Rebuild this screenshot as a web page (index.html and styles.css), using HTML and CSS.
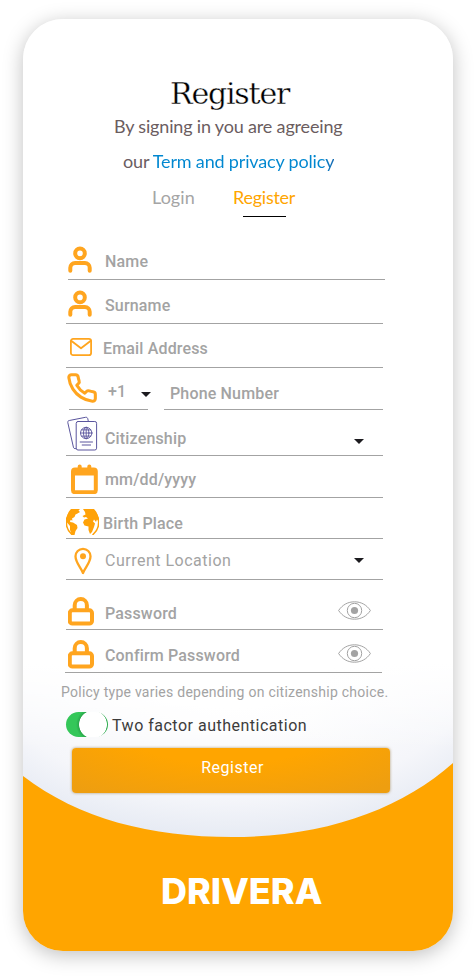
FILE: index.html
```html
<!DOCTYPE html>
<html lang="en">
<head>
<meta charset="utf-8">
<title>Drivera – Register</title>
<link rel="stylesheet" href="styles.css">
</head>
<body>
<svg class="defs" width="0" height="0" aria-hidden="true">
  <symbol id="user" viewBox="0 0 24 28"><circle cx="12" cy="7.4" r="4.8"/><path d="M2.300 24.700v-3a4.800 4.800 0 0 1 4.800-4.800h9.800a4.800 4.800 0 0 1 4.800 4.800v3"/></symbol>
  <symbol id="lock" viewBox="0 0 26 29"><rect x="1.8" y="13.3" width="22.2" height="13.3" rx="2.6"/><path d="M6.7 13V8.2a6.1 6.1 0 0 1 12.2 0V13"/></symbol>
  <symbol id="eye" viewBox="0 0 33 19"><path d="M.6 9.5C4.5 3.7 10 .8 16.500 .8S28.500 3.700 32.400 9.500C28.500 15.300 23 18.200 16.500 18.200S4.500 15.300 .6 9.500z"/><circle cx="16.500" cy="9.500" r="7.200"/><circle class="pupil" cx="16.500" cy="9.500" r="3.600"/></symbol>
</svg>
<main class="card">
  <svg class="backdrop" viewBox="0 0 430 932" aria-hidden="true"><path d="M0 757C56 800 128 818 209 818C303 818 378 790 430 744V932H0z"/></svg>
  <header class="head">
    <h1>Register</h1>
    <p class="terms terms-first">By signing in you are agreeing</p>
    <p class="terms terms-second">our <a>Term and privacy policy</a></p>
    <nav class="tabs"><a class="login">Login</a><a class="current">Register</a></nav>
  </header>
  <form class="form">
    <div class="row name"><svg class="icon user"><use href="#user"/></svg><label>Name</label></div>
    <div class="row surname"><svg class="icon user"><use href="#user"/></svg><label>Surname</label></div>
    <div class="row email"><svg class="icon" width="22" height="18" viewBox="0 0 22 18"><rect x=".9" y=".9" width="20.200" height="16.200" rx="2.200"/><path d="M1.200 2.800L11 10.300l9.800-7.500"/></svg><label>Email Address</label></div>
    <div class="split">
      <div class="row code"><svg class="icon" width="32" height="32" viewBox="0 0 24 24"><path d="M22 16.920v3a2 2 0 0 1-2.180 2 19.790 19.790 0 0 1-8.630-3.070 19.500 19.500 0 0 1-6-6 19.790 19.790 0 0 1-3.070-8.670A2 2 0 0 1 4.110 2h3a2 2 0 0 1 2 1.720c.13.96.36 1.900.7 2.810a2 2 0 0 1-.45 2.110L8.090 9.910a16 16 0 0 0 6 6l1.270-1.270a2 2 0 0 1 2.110-.45c.91.34 1.850.57 2.810.7A2 2 0 0 1 22 16.920z"/></svg><label>+1</label><i class="arrow"></i></div>
      <div class="row phone"><label>Phone Number</label></div>
    </div>
    <div class="row citizenship"><svg class="icon" width="31" height="35" viewBox="0 0 31 35"><path d="M11 5.500h16.800a1.800 1.800 0 0 1 1.800 1.800v24.900a1.800 1.800 0 0 1-1.800 1.800H11a1.800 1.800 0 0 1-1.800-1.800V7.300a1.800 1.800 0 0 1 1.800-1.800zM9 32.600c-1.700.3-2.400-.3-2.600-1.500L.8 6.600c-.2-1.200.3-1.900 1.500-2.100L18.500 1.300c1.300-.2 2 .3 2.300 1.500l.5 2.500"/><path d="M13.200 26h12.300M15.200 29h8.400"/><g class="mini-globe"><circle cx="19.200" cy="17" r="5.700"/><ellipse cx="19.200" cy="17" rx="2.700" ry="5.700"/><path d="M19.200 11.300v11.400M13.500 17h11.400M14.600 13.900h9.200M14.600 20.100h9.200"/></g></svg><label>Citizenship</label><i class="arrow"></i></div>
    <div class="row date"><svg class="icon" width="28" height="30" viewBox="0 0 28 30"><rect x="3" y="5.400" width="22.800" height="22.800" rx="2"/><path d="M9.700 2.600v4.500M19.300 2.600v4.500"/><path class="solid" d="M3 5h23v6.500H3z"/></svg><label>mm/dd/yyyy</label></div>
    <div class="row birth"><svg class="icon" width="33" height="26" viewBox="0 0 33 26"><path class="ring" d="M6 1A16 16 0 0 0 6 25.500M27 1A16 16 0 0 1 27 25.500"/><path d="M5 0H14L12.500 1.500 14 3 11.500 4.500 9.500 5.500 8.500 8 6 9.500 6.500 11.500 4.500 11 4 13 7 13.500 11 16 11.500 19 9.500 22 8.500 26H6L4 21 4 17 1 13.500C0 8 2 3 5 0zM17 0H28C31 3 33 8 33 13L31 10.500 30 13 28 10.500 27 12.500 29 14.500 28 18 26 23 24 25 22.500 21 22.500 17.500 18.500 16.500 17 13.500 18.500 10.500 22 9.500 20 8 18 8.500 16.500 7 19.500 5.500 19 3z"/></svg><label>Birth Place</label></div>
    <div class="row location"><svg class="icon" width="18" height="28" viewBox="0 0 18 28"><path d="M9 26C6.800 20.500 1.500 15.500 1.500 9.300a7.500 7.500 0 0 1 15 0C16.500 15.500 11.200 20.500 9 26z"/><circle class="solid" cx="9" cy="9.200" r="3"/></svg><label>Current Location</label><i class="arrow"></i></div>
    <div class="row password"><svg class="icon lock"><use href="#lock"/></svg><label>Password</label><svg class="eye"><use href="#eye"/></svg></div>
    <div class="row confirm"><svg class="icon lock"><use href="#lock"/></svg><label>Confirm Password</label><svg class="eye"><use href="#eye"/></svg></div>
    <p class="policy">Policy type varies depending on citizenship choice.</p>
    <div class="two-factor"><span class="toggle"></span><span>Two factor authentication</span></div>
    <button class="submit" type="button">Register</button>
  </form>
  <footer class="brand">DRIVERA</footer>
</main>
</body>
</html>
```
FILE: styles.css
```css
* { box-sizing: border-box; }
body { margin: 0; height: 978px; padding: 19px 23px; overflow: hidden; background: #fff; font-family: Roboto, sans-serif; }
h1, p { margin: 0; font-weight: 400; }
.defs { position: absolute; }
.card {
  position: relative; width: 430px; height: 932px; border-radius: 40px; overflow: hidden; isolation: isolate;
  background: radial-gradient(ellipse 340px 198px at 209px 0, #fff 30%, #f5f6fa 75%, #e3e8f2 100%) 0 630px no-repeat #fff;
}
body::before {
  content: ""; position: absolute; z-index: -1; left: 23px; top: 19px; width: 430px; height: 932px;
  border-radius: 40px; box-shadow: 0 4px 20px rgba(0, 0, 0, .25);
}
.card::before {
  content: ""; position: absolute; z-index: -1; left: 0; top: 630px; width: 430px; height: 100px;
  background: linear-gradient(#fff 15%, rgba(255, 255, 255, 0));
}
.backdrop { position: absolute; z-index: -1; inset: 0; fill: #ffa500; }

.head { height: 221px; padding-top: 54px; font-family: Lato, sans-serif; white-space: nowrap; }
h1 { margin-left: 147px; font: 30px/42px "DejaVu Serif", serif; letter-spacing: -1.2px; color: #000; -webkit-text-stroke: .35px #fff; }
.terms { font-size: 18px; line-height: 24px; letter-spacing: -.17px; color: #6b5d5f; }
.terms-first { margin: -1px 0 0 91px; }
.terms-second { margin: 11px 0 0 100px; }
.terms a { background: linear-gradient(90deg, #0087d0 93%, #1668b0); background-clip: text; color: transparent; }
.tabs { display: flex; margin: 12px 0 0 129px; font-size: 18px; line-height: 24px; letter-spacing: -.25px; }
.login { width: 81px; color: #a5a5a5; letter-spacing: .05px; }
.current { width: 63px; height: 32px; color: #ffa500; background: linear-gradient(#000, #000) 10px 31px / 43px 1px no-repeat; }

.form { width: 317px; margin-left: 43px; color: #a3a3a3; font-size: 16px; line-height: 20px; font-weight: 500; white-space: nowrap; }
.row { display: flex; align-items: flex-start; border-bottom: 1px solid #a3a3a3; letter-spacing: .16px; }
.icon { flex: none; fill: none; stroke: #ffa51f; stroke-width: 4; stroke-linecap: round; stroke-linejoin: round; }
.solid { fill: #ffa51f; stroke: none; }
.user { width: 24px; height: 28px; }
.lock { width: 26px; height: 29px; margin-left: 2px; }
.arrow { width: 10px; height: 5px; margin-left: auto; background: #1c1b1f; clip-path: polygon(0 0, 100% 0, 50% 100%); }
.eye { width: 33px; height: 19px; margin-left: auto; fill: none; stroke: #a3a3a3; stroke-width: 1; }
.pupil { fill: #a3a3a3; stroke: none; }

.name { width: 317px; height: 40px; margin-left: 2px; padding-top: 6px; }
.name label { margin: 6px 0 0 13px; }
.surname { height: 44px; padding-top: 10px; }
.surname .icon { margin-left: 2px; }
.surname label { margin: 6px 0 0 13px; }
.email { height: 44px; padding-top: 14px; }
.email .icon { margin-left: 4px; stroke-width: 1.8; }
.email label { margin: 1px 0 0 11px; }
.split { display: flex; gap: 16px; }
.code { width: 79px; height: 42px; margin-left: 3px; padding-top: 4px; }
.code .icon { margin-left: -3px; stroke-width: 2.3; }
.code label { margin: 10px 0 0 10px; }
.code .arrow { margin: 20px -3px 0 auto; }
.phone { flex: 1; height: 42px; padding: 16px 0 0 6px; }
.citizenship { height: 46px; padding-top: 6px; }
.citizenship .icon { margin-left: 1px; stroke: #5a559d; stroke-width: 1; }
.citizenship .mini-globe { stroke-width: .9; }
.citizenship label { margin: 13px 0 0 7px; }
.citizenship .arrow { margin: 23px 19px 0 auto; }
.date { height: 42px; padding-top: 8px; }
.date .icon { margin-left: 4px; }
.date label { margin: 6px 0 0 7px; }
.birth { height: 41px; padding-top: 11px; }
.birth .icon { fill: #ffa208; stroke: none; }
.birth .ring { fill: none; stroke: #ffa208; stroke-width: 1.6; }
.birth label { margin: 5px 0 0 4px; }
.location { height: 41px; padding-top: 8px; font-weight: 400; letter-spacing: .5px; }
.location .icon { margin-left: 8px; stroke-width: 2.300; }
.location label { margin: 4px 0 0 13px; }
.location .arrow { margin: 11px 19px 0 auto; }
.password { height: 50px; padding-top: 17px; }
.password label { margin: 7px 0 0 11px; }
.password .eye { margin: 4px 12px 0 auto; }
.confirm { width: 317px; height: 43px; margin-left: -1px; padding-top: 10px; }
.confirm .icon { margin-left: 3px; }
.confirm label { margin: 6px 0 0 11px; }
.confirm .eye { margin: 4px 11px 0 auto; }

.policy { margin: 9px 0 0 -5px; font-size: 14px; font-weight: 400; letter-spacing: .25px; }
.two-factor { display: flex; height: 25px; margin-top: 10px; gap: 4px; color: #3c3c3c; font-weight: 400; line-height: 27px; letter-spacing: .5px; }
.toggle { width: 42px; height: 25px; border-radius: 13px; background: radial-gradient(circle at 27px 12.500px, #fff 13.500px, #2ba84c 14.200px, #34c759 17px); }
.submit {
  display: block; width: 318px; height: 45px; margin: 11px 0 0 6px; padding: 0 0 5px 3px; border: 0; border-radius: 4px;
  color: #fff; font: 400 16px/20px Roboto, sans-serif; letter-spacing: .5px;
  background: radial-gradient(ellipse 230px 80px at 155px -20px, #ffa500 45%, #ee9e10 100%);
  box-shadow: 0 0 3px rgba(130, 90, 20, .6);
}
.brand { margin: 76px 0 0 138px; color: #fff; font: 800 36px/44px Inter, sans-serif; }
```
